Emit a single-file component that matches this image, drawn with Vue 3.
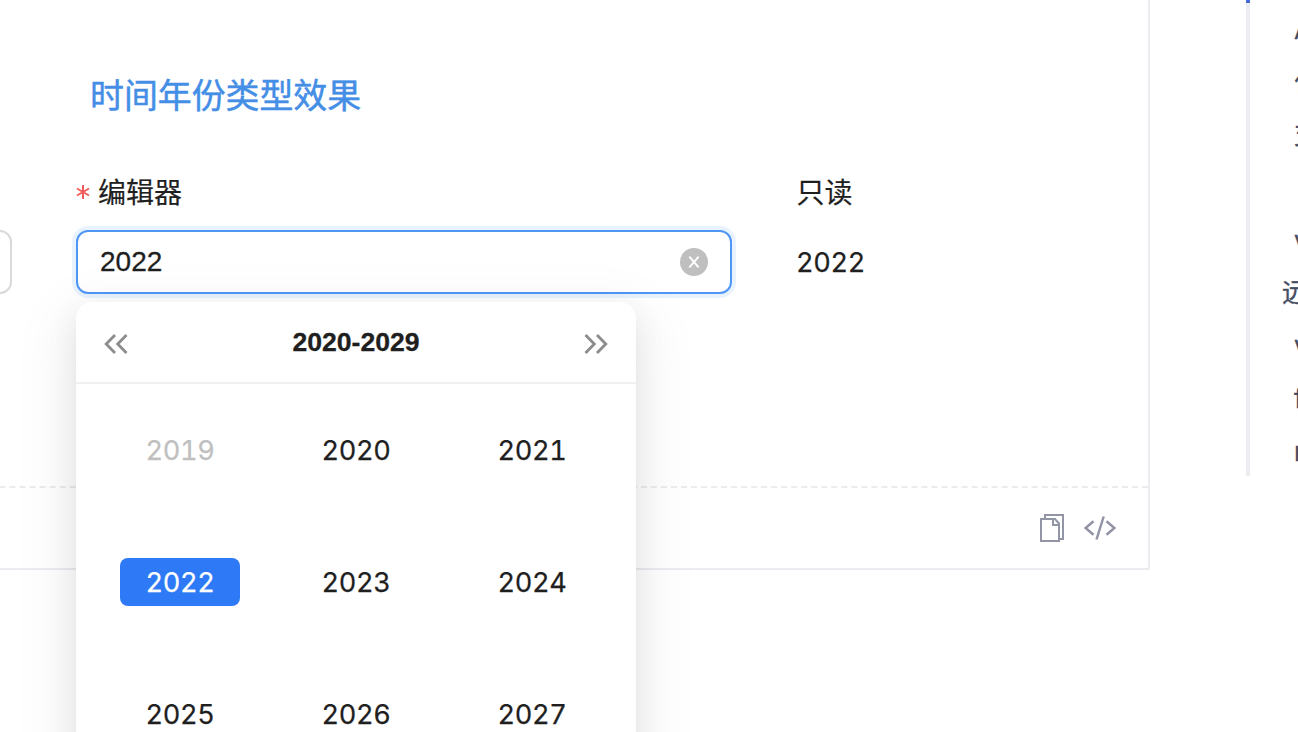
<script setup>
const years = [2019, 2020, 2021, 2022, 2023, 2024, 2025, 2026, 2027]
const anchors = [
  { text: 'API' },
  { text: '作用' },
  { text: '支持' },
  { text: '' },
  { text: 'valueEnum' },
  { text: '远程数据', outer: true },
  { text: 'valueType' },
  { text: 'fieldProps' },
  { text: 'render' },
]
</script>

<template>
  <div class="page">
    <main class="card">
      <section class="preview">
        <h2 class="title">时间年份类型效果</h2>
        <div class="columns">
          <div class="field previous">
            <div class="label"></div>
            <div class="input"></div>
          </div>
          <div class="field editor">
            <div class="label">
              <svg class="required" viewBox="0 0 14 16"><path d="M7 1v14M1 4.5l12 7M13 4.5l-12 7" /></svg>
              <span>编辑器</span>
            </div>
            <div class="input focused">
              <span>2022</span>
              <svg class="clear" viewBox="0 0 28 28">
                <circle cx="14" cy="14" r="14" />
                <path d="M9.4 8.6l9.2 10.8M18.6 8.6l-9.2 10.8" />
              </svg>
            </div>
            <div class="popup">
              <header>
                <svg class="arrow" viewBox="0 0 24 20"><path d="M11 1L2.2 10l8.8 9M22.5 1l-8.8 9 8.8 9" /></svg>
                <strong>2020-2029</strong>
                <svg class="arrow" viewBox="0 0 24 20"><path d="M1.5 1l8.8 9-8.8 9M13 1l8.8 9-8.8 9" /></svg>
              </header>
              <div class="years">
                <div v-for="year in years" :key="year" class="cell">
                  <span :class="{ muted: year === 2019, selected: year === 2022 }">{{ year }}</span>
                </div>
              </div>
            </div>
          </div>
          <div class="field readonly">
            <div class="label"><span>只读</span></div>
            <div class="value">2022</div>
          </div>
        </div>
      </section>
      <footer class="actions">
        <svg class="copy" viewBox="0 0 24 28">
          <path d="M5 4V1h18v24h-3M1 5h14l4 4.5V27H1zM13 5v6h6" />
        </svg>
        <svg class="code" viewBox="0 0 32 24">
          <path d="M9.5 5.2L1.6 12l7.9 6.8M22.5 5.2l7.9 6.8-7.9 6.8M19.7.5l-7.2 23" />
        </svg>
      </footer>
    </main>
    <aside class="anchors">
      <div v-for="(item, i) in anchors" :key="i" class="anchor" :class="{ outer: item.outer }">{{ item.text }}</div>
    </aside>
  </div>
</template>

<style>
body { background: #fff; }
</style>

<style scoped>
* { box-sizing: border-box; }
.page {
  display: flex;
  width: 1298px;
  height: 732px;
  overflow: hidden;
  background: #fff;
  color: #1f1f1f;
  font: 28px/44px Inter, "Noto Sans CJK SC", sans-serif;
  font-feature-settings: "tnum";
}
.card {
  flex: none;
  width: 1371px;
  height: 570px;
  margin-left: -221px;
  border-right: 2px solid #ebebf0;
  border-bottom: 2px solid #ebebf0;
  border-radius: 0 0 2px 0;
}
.preview { height: 486px; padding-top: 71px; }
.title {
  margin: 0 0 0 311px;
  color: #448ee6;
  font-size: 33.9px;
  font-weight: 400;
  line-height: 50px;
  -webkit-text-stroke: .5px;
}
.columns { display: flex; gap: 64px; padding-top: 49px; }
.field { flex: none; }
.previous { width: 233px; }
.editor { position: relative; width: 656px; }
.label { display: flex; align-items: center; height: 44px; margin-bottom: 16px; -webkit-text-stroke: .2px; }
.label span { padding-top: 2px; }
.readonly .label { padding-left: .5px; }
.required { width: 14px; height: 16px; margin: 0 8px 0 0; fill: none; stroke: #f15b5b; stroke-width: 2; }
.input {
  display: flex;
  align-items: center;
  justify-content: space-between;
  height: 64px;
  padding: 0 22px;
  border: 2px solid #d9d9d9;
  border-radius: 12px;
  background: #fff;
  font-family: "Liberation Sans", sans-serif;
  -webkit-text-stroke: .3px;
}
.focused { border-color: #5096f5; box-shadow: 0 0 0 4px #e8f3fe; }
.clear { width: 28px; height: 28px; }
.clear circle { fill: #bfbfbf; }
.clear path { stroke: #fff; stroke-width: 1.9; fill: none; }
.value {
  height: 64px;
  line-height: 66px;
  font-size: 27.2px;
  letter-spacing: -.35px;
  -webkit-text-stroke: .25px;
}
.popup {
  position: absolute;
  z-index: 1;
  top: 132px;
  left: 0;
  width: 560px;
  height: 520px;
  border-radius: 16px;
  background: #fff;
  box-shadow: 0 6px 12px -8px rgba(0, 0, 0, .12), 0 12px 32px rgba(0, 0, 0, .08), 0 18px 56px 16px rgba(0, 0, 0, .05);
}
.popup header {
  display: flex;
  align-items: center;
  justify-content: space-between;
  height: 82px;
  padding: 0 28px;
  border-bottom: 2px solid #f0f0f0;
  font-family: "Liberation Sans", sans-serif;
}
.popup strong { font-size: 26.6px; line-height: 80px; -webkit-text-stroke: .3px; }
.arrow { width: 24px; height: 20px; margin-top: 4px; fill: none; stroke: #8c8c8c; stroke-width: 2.8; }
.years { display: grid; grid-template-columns: repeat(3, 176px); grid-auto-rows: 132px; padding: 0 16px; }
.cell { display: flex; align-items: center; justify-content: center; }
.cell span {
  width: 120px;
  height: 48px;
  border-radius: 8px;
  text-align: center;
  line-height: 50px;
  font-size: 27.2px;
  letter-spacing: -.35px;
  -webkit-text-stroke: .25px;
}
.cell .muted { color: #bfbfbf; }
.cell .selected { background: #2e79f6; color: #fff; }
.actions {
  display: flex;
  align-items: center;
  justify-content: flex-end;
  gap: 20px;
  height: 82px;
  padding-right: 32px;
  border-top: 2px dashed #ebebf0;
}
.actions svg { fill: none; stroke: #9195a5; }
.copy { width: 24px; height: 28px; stroke-width: 2; }
.code { width: 32px; height: 24px; stroke-width: 2.5; }
.anchors {
  flex: none;
  width: 300px;
  height: 476px;
  margin-left: 96px;
  padding: 4px 0 0 48px;
  background: linear-gradient(#4569d4 3px, #ebedf1 3px) left / 4px 100% no-repeat;
}
.anchor {
  height: 52.7px;
  line-height: 52.7px;
  font-size: 26px;
  color: #454d64;
  white-space: nowrap;
  -webkit-text-stroke: .3px;
}
.anchor.outer { margin-left: -12px; }
</style>
